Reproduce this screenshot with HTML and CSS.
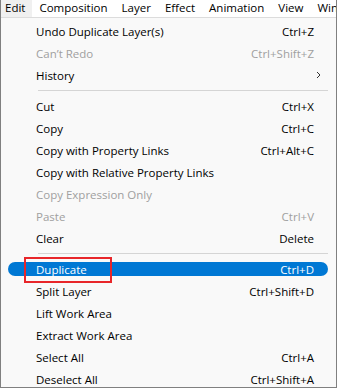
FILE: index.html
```html
<!DOCTYPE html>
<html>
<head>
<meta charset="utf-8">
<link rel="stylesheet" href="styles.css">
</head>
<body>
<div class="frame">
  <div class="menubar">
    <span class="mb-item active first">Edit</span>
    <span class="mb-item">Composition</span>
    <span class="mb-item">Layer</span>
    <span class="mb-item">Effect</span>
    <span class="mb-item">Animation</span>
    <span class="mb-item">View</span>
    <span class="mb-item">Window</span>
  </div>
  <div class="dropdown">
    <div class="item"><div class="inner"><span>Undo Duplicate Layer(s)</span><span>Ctrl+Z</span></div></div>
    <div class="item disabled"><div class="inner"><span>Can’t Redo</span><span>Ctrl+Shift+Z</span></div></div>
    <div class="item"><div class="inner"><span>History</span><svg class="chev" width="5" height="8" viewBox="0 0 5 8"><path d="M1 1 L4 4 L1 7" fill="none" stroke="#333" stroke-width="1"/></svg></div></div>
    <div class="sep"></div>
    <div class="item"><div class="inner"><span>Cut</span><span>Ctrl+X</span></div></div>
    <div class="item"><div class="inner"><span>Copy</span><span>Ctrl+C</span></div></div>
    <div class="item"><div class="inner"><span>Copy with Property Links</span><span>Ctrl+Alt+C</span></div></div>
    <div class="item"><div class="inner"><span>Copy with Relative Property Links</span></div></div>
    <div class="item disabled"><div class="inner"><span>Copy Expression Only</span></div></div>
    <div class="item disabled"><div class="inner"><span>Paste</span><span>Ctrl+V</span></div></div>
    <div class="item"><div class="inner"><span>Clear</span><span>Delete</span></div></div>
    <div class="sep"></div>
    <div class="item selected"><div class="inner"><span>Duplicate</span><span>Ctrl+D</span></div><div class="callout"></div></div>
    <div class="item"><div class="inner"><span>Split Layer</span><span>Ctrl+Shift+D</span></div></div>
    <div class="item"><div class="inner"><span>Lift Work Area</span></div></div>
    <div class="item"><div class="inner"><span>Extract Work Area</span></div></div>
    <div class="item"><div class="inner"><span>Select All</span><span>Ctrl+A</span></div></div>
    <div class="item"><div class="inner"><span>Deselect All</span><span>Ctrl+Shift+A</span></div></div>
  </div>
</div>
</body>
</html>
```
FILE: styles.css
```css
html, body {
  margin: 0;
  padding: 0;
  background: #fff;
}
body {
  font-family: "Open Sans", "Noto Sans", sans-serif;
  font-size: 11.5px;
  color: #000;
}
.frame {
  width: 337px;
  height: 388px;
  box-sizing: border-box;
  border: 1px solid #808080;
  border-top: none;
  overflow: hidden;
  background: #f9f9f9;
}
.menubar {
  height: 17px;
  display: flex;
  align-items: center;
  background: #fff;
  white-space: nowrap;
  overflow: hidden;
  border-bottom: 1px solid #dcdcdc;
}
.mb-item {
  height: 17px;
  line-height: 16px;
  padding: 0 7px 0 7px;
  flex-shrink: 0;
}
.mb-item.first {
  padding-left: 4px;
}
.mb-item.active {
  background: #f0f0f0;
}
.dropdown {
  padding-top: 2px;
  background: #f9f9f9;
}
.item {
  position: relative;
  height: 22px;
  display: flex;
  align-items: center;
  padding: 0 8px 0 7px;
}
.inner {
  flex: 1;
  height: 14px;
  display: flex;
  align-items: center;
  justify-content: space-between;
  padding: 0 14px 0 28px;
  border-radius: 7px;
  white-space: nowrap;
}
.disabled {
  color: #a0a0a0;
}
.selected .inner {
  background: #0078d4;
  color: #fff;
}
.chev {
  margin-right: -7px;
}
.sep {
  height: 1px;
  background: #d5d5d5;
  margin: 4px 8px 4px 37px;
}
.callout {
  position: absolute;
  left: 23px;
  top: -1px;
  width: 88px;
  height: 26px;
  box-sizing: border-box;
  border: 2px solid #e8262a;
}
```
